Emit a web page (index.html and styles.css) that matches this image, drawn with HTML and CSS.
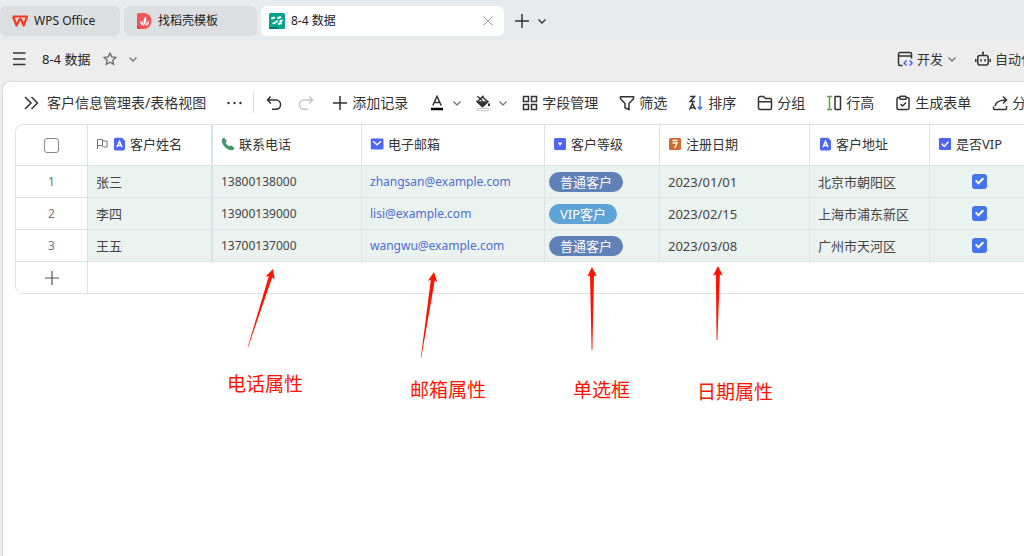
FILE: index.html
```html
<!DOCTYPE html>
<html lang="zh-CN">
<head>
  <meta charset="UTF-8">
  <meta name="viewport" content="width=device-width, initial-scale=1">
  <title>8-4 数据</title>
  <link rel="stylesheet" href="styles.css">
</head>
<body>
  <nav class="tabs">
    <a class="tab tab-home" href="#">
      <svg class="tab-icon" viewBox="0 0 16 16"><path d="M1 3.500h14L11.800 12.500 8.600 5.500M1 3.500l3.600 9L8 5.500" fill="none" stroke="#f5391f" stroke-width="2.200" stroke-linejoin="round"/></svg>
      WPS Office
    </a>
    <a class="tab tab-template" href="#">
      <svg class="tab-icon" viewBox="0 0 16 16"><path d="M3 0h5a7.500 8 0 0 1 0 16H3a2 2 0 0 1-2-2V2a2 2 0 0 1 2-2z" fill="#f0575a"/><path d="M1 12l3 4H3a2 2 0 0 1-2-2z" fill="#d32f35"/><path d="M8 13c-3-1-4-3-3.500-5 2 .5 3 2 3.500 5zM8.300 12c-1.500-3-1-6 1.200-8.500 1.500 3 1 6-1.200 8.500zM9.500 13c.2-2 1.200-4 3.500-5 .3 2.500-1 4.500-3.500 5z" fill="#fff"/></svg>
      找稻壳模板
    </a>
    <div class="tab tab-active">
      <svg class="tab-icon" viewBox="0 0 16 16"><rect width="16" height="16" rx="1.500" fill="#07a58f"/><path d="M0 14h8l2 2H1.500A1.500 1.500 0 0 1 0 14.500z" fill="#04786a"/><path d="M3.200 5.300l1.800-.6M9 5l2.200-.7M4.500 10.200l1.500-.5M10 10.800l1.800-.6M6.500 6.500M11.500 8l1.200-.3M7 8.800l1-.3" stroke="#fff" stroke-width="2.200" stroke-linecap="round"/></svg>
      <span class="tab-name">8-4 数据</span>
      <button class="icon-btn" aria-label="关闭"><svg class="close" viewBox="0 0 12 12"><path d="M1.500 1.500l9 9M10.500 1.500l-9 9"/></svg></button>
    </div>
    <button class="icon-btn tab-add" aria-label="新建"><svg class="icon" viewBox="0 0 16 16"><path d="M8 1v14M1 8h14"/></svg></button>
    <button class="icon-btn" aria-label="更多标签"><svg class="chevron dark" viewBox="0 0 10 10"><path d="M1.500 3.500L5 7l3.500-3.500"/></svg></button>
  </nav>

  <header class="header">
    <button class="icon-btn" aria-label="菜单"><svg class="icon" viewBox="0 0 16 16"><path d="M2 2h12.500M2 8h12.500M2 13.500h12.500"/></svg></button>
    <h1 class="doc-name">8-4 数据</h1>
    <button class="icon-btn" aria-label="收藏"><svg class="icon star" viewBox="0 0 16 16"><path d="M8 2.200l1.800 3.700 4 .5-3 2.800.8 4L8 11.300l-3.600 1.900.8-4-3-2.800 4-.5z"/></svg></button>
    <button class="icon-btn" aria-label="文件操作"><svg class="chevron" viewBox="0 0 10 10"><path d="M1.500 3.500L5 7l3.500-3.500"/></svg></button>
    <div class="header-tools">
      <button class="tool">
        <svg class="icon" viewBox="0 0 16 16"><path d="M5.500 14.500H3A1.500 1.500 0 0 1 1.500 13V3A1.500 1.500 0 0 1 3 1.500h10A1.500 1.500 0 0 1 14.500 3v4.500M1.500 5h13"/><path d="M9.500 9.500L7.200 12l2.300 2.500M12.700 9.500L15 12l-2.300 2.500" stroke="#4a63f0"/></svg>
        开发
        <svg class="chevron" viewBox="0 0 10 10"><path d="M1.500 3.500L5 7l3.500-3.500"/></svg>
      </button>
      <button class="tool">
        <svg class="icon" viewBox="0 0 16 16"><rect x="2.800" y="4.500" width="10.400" height="9.500" rx="2"/><path d="M8 4.500V1M7 1.500h2M.8 8v3M15.200 8v3M6 8v2.500M10 8v2.500"/></svg>
        自动化
      </button>
    </div>
  </header>

  <main class="panel">
    <div class="toolbar">
      <button class="tool view-name">
        <svg class="icon" viewBox="0 0 16 16"><path d="M2 2l6 6-6 6M8.500 2l6 6-6 6"/></svg>
        客户信息管理表/表格视图
      </button>
      <button class="icon-btn" aria-label="更多"><svg class="icon dots" viewBox="0 0 16 16"><circle cx="1.500" cy="8" r="1.200"/><circle cx="7.500" cy="8" r="1.200"/><circle cx="13.500" cy="8" r="1.200"/></svg></button>
      <div class="history">
        <button class="icon-btn" aria-label="撤销"><svg class="icon" viewBox="0 0 16 16"><path d="M4.500 1.500L1.500 5l3.500 3.500M1.500 5H10a4.600 4.600 0 0 1 0 9.200H6"/></svg></button>
        <button class="icon-btn" aria-label="重做" disabled><svg class="icon" viewBox="0 0 16 16"><path d="M11.500 1.500l3 3.500-3.500 3.500M14.500 5H6a4.600 4.600 0 0 0 0 9.200h4"/></svg></button>
      </div>
      <button class="tool">
        <svg class="icon" viewBox="0 0 16 16"><path d="M8 1v14M1 8h14"/></svg>
        添加记录
      </button>
      <div class="colors">
        <button class="tool" aria-label="字体颜色">
          <svg class="icon" viewBox="0 0 16 16"><path d="M3.800 10.500L8 1.300l4.200 9.200M5.200 7.500h5.600"/><path d="M2 14h12" stroke="#000" stroke-width="2.600"/></svg>
          <svg class="chevron" viewBox="0 0 10 10"><path d="M1.500 3.500L5 7l3.500-3.500"/></svg>
        </button>
        <button class="tool" aria-label="填充颜色">
          <svg class="icon" viewBox="0 0 16 16"><path d="M2.500 6.500L7.500 2l5 4.500L7.500 11.500zM2.500 1.200l5 4.500M4 5L8.500.8"/><path d="M2.500 7h10l-5 4.500z" fill="#333"/><path d="M14 8.500V11" stroke-width="2"/><path d="M2 13.500h11.500v2H2z" stroke="#ccc" stroke-width="1"/></svg>
          <svg class="chevron" viewBox="0 0 10 10"><path d="M1.500 3.500L5 7l3.500-3.500"/></svg>
        </button>
      </div>
      <button class="tool">
        <svg class="icon" viewBox="0 0 16 16"><rect x="1.500" y="1.500" width="5" height="5"/><rect x="9.500" y="1.500" width="5" height="5"/><rect x="1.500" y="9.500" width="5" height="5"/><rect x="9.500" y="9.500" width="5" height="5"/></svg>
        字段管理
      </button>
      <button class="tool">
        <svg class="icon" viewBox="0 0 16 16"><path d="M1.500 1.800h13v2L10 8.500v6L6 12.800V8.500L1.500 3.800z"/></svg>
        筛选
      </button>
      <button class="tool">
        <svg class="icon" viewBox="0 0 16 16"><path d="M2 1.500h4.500L2.200 6.500H7M1.500 14.500l3-6 3 6M2.500 12.800h4"/><path d="M12 1v13M9.800 11.800L12 14.300l2.200-2.500" stroke="#4a7be8"/></svg>
        排序
      </button>
      <button class="tool">
        <svg class="icon" viewBox="0 0 16 16"><path d="M1.500 13V3A1.500 1.500 0 0 1 3 1.500h3.500l2 2H13A1.500 1.500 0 0 1 14.500 5v8a1.500 1.500 0 0 1-1.500 1.500H3A1.500 1.500 0 0 1 1.500 13zM1.500 6.800h13"/></svg>
        分组
      </button>
      <button class="tool">
        <svg class="icon" viewBox="0 0 16 16"><path d="M1 1.500h5M3.500 1.500v13M1 14.500h5" stroke="#5fa046"/><rect x="9" y="1.500" width="5.500" height="13" rx=".5"/></svg>
        行高
      </button>
      <button class="tool">
        <svg class="icon" viewBox="0 0 16 16"><path d="M5 2.500H3.500A1.500 1.500 0 0 0 2 4v9a1.500 1.500 0 0 0 1.500 1.500h9A1.500 1.500 0 0 0 14 13V4a1.500 1.500 0 0 0-1.500-1.500H11"/><rect x="5" y="1.200" width="6" height="3" rx=".8"/><path d="M5.500 9l2 2 3.500-3.500"/></svg>
        生成表单
      </button>
      <button class="tool">
        <svg class="icon" viewBox="0 0 16 16"><path d="M11 1.500l3.500 3.500L11 8.500M14 5c-6 0-10 2-11 6M1.500 11.500v2a1 1 0 0 0 1 1h11a1 1 0 0 0 1-1V11"/></svg>
        分享
      </button>
    </div>

    <div class="grid">
      <table>
        <colgroup>
          <col class="col-index"><col class="col-name"><col class="col-phone"><col class="col-mail">
          <col class="col-level"><col class="col-date"><col class="col-address"><col class="col-vip"><col>
        </colgroup>
        <thead>
          <tr>
            <th class="index"><input class="box" type="checkbox" aria-label="全选"></th>
            <th class="frozen"><div class="field">
              <svg class="flag" viewBox="0 0 12 14"><path d="M1.500 12V2.500h5v6h-5M6.500 4h4.500v6H7.500l-1-1.500"/></svg>
              <svg class="type" viewBox="0 0 14 14"><path d="M3.500.8H10l3 3v7.700a2 2 0 0 1-2 2H3.500A1.500 1.500 0 0 1 2 12V2.300A1.500 1.500 0 0 1 3.500.8z" fill="#4d66f5"/><path d="M5 10.300l2.500-6 2.500 6M5.800 8.500h3.400" fill="none" stroke="#fff" stroke-width="1.400"/></svg>
              客户姓名</div></th>
            <th><div class="field">
              <svg class="type" viewBox="0 0 14 14"><path d="M.8 2.200L3 .6l2.800 3.500-1.200 1.700c.7 1.500 1.800 2.500 3.500 3.400l1.700-.9 3.500 2.400c.3 1.300-1.300 2.500-2.600 2.500C5.300 13.200.1 7 .8 2.200z" fill="#459668"/></svg>
              联系电话</div></th>
            <th><div class="field">
              <svg class="type" viewBox="0 0 14 14"><rect x=".8" y="1.500" width="12.700" height="11" rx="1.200" fill="#4d66f5"/><path d="M3 4.200l4 3.600 4-3.600" fill="none" stroke="#fff" stroke-width="1.300"/></svg>
              电子邮箱</div></th>
            <th><div class="field">
              <svg class="type" viewBox="0 0 14 14"><rect x="1" y="1" width="12" height="12" rx="1.500" fill="#4d66f5"/><path d="M4.800 5.500h4.400L7 9z" fill="#fff"/></svg>
              客户等级</div></th>
            <th><div class="field">
              <svg class="type" viewBox="0 0 14 14"><rect x="1" y="1" width="12" height="12" rx="1.500" fill="#ce6a32"/><path d="M4.500 3.500h5M4.500 6h4.700L6.800 11" fill="none" stroke="#fff" stroke-width="1.400"/></svg>
              注册日期</div></th>
            <th><div class="field">
              <svg class="type" viewBox="0 0 14 14"><path d="M3.500.8H10l3 3v7.700a2 2 0 0 1-2 2H3.500A1.500 1.500 0 0 1 2 12V2.300A1.500 1.500 0 0 1 3.500.8z" fill="#4d66f5"/><path d="M5 10.300l2.500-6 2.500 6M5.800 8.500h3.400" fill="none" stroke="#fff" stroke-width="1.400"/></svg>
              客户地址</div></th>
            <th><div class="field">
              <svg class="type" viewBox="0 0 14 14"><rect x="1" y="1" width="12" height="12" rx="1" fill="#4d66f5"/><path d="M3.700 6.800l2.500 2.600 4.300-4.600" fill="none" stroke="#fff" stroke-width="1.500"/></svg>
              是否VIP</div></th>
            <th></th>
          </tr>
        </thead>
        <tbody>
          <tr>
            <td class="index">1</td>
            <td class="frozen">张三</td>
            <td class="contact">13800138000</td>
            <td class="contact"><a href="mailto:zhangsan@example.com">zhangsan@example.com</a></td>
            <td class="level"><span class="tag">普通客户</span></td>
            <td>2023/01/01</td>
            <td>北京市朝阳区</td>
            <td class="check"><input class="box" type="checkbox" aria-label="张三 是否VIP" checked></td>
            <td></td>
          </tr>
          <tr>
            <td class="index">2</td>
            <td class="frozen">李四</td>
            <td class="contact">13900139000</td>
            <td class="contact"><a href="mailto:lisi@example.com">lisi@example.com</a></td>
            <td class="level"><span class="tag tag-vip">VIP客户</span></td>
            <td>2023/02/15</td>
            <td>上海市浦东新区</td>
            <td class="check"><input class="box" type="checkbox" aria-label="李四 是否VIP" checked></td>
            <td></td>
          </tr>
          <tr>
            <td class="index">3</td>
            <td class="frozen">王五</td>
            <td class="contact">13700137000</td>
            <td class="contact"><a href="mailto:wangwu@example.com">wangwu@example.com</a></td>
            <td class="level"><span class="tag">普通客户</span></td>
            <td>2023/03/08</td>
            <td>广州市天河区</td>
            <td class="check"><input class="box" type="checkbox" aria-label="王五 是否VIP" checked></td>
            <td></td>
          </tr>
        </tbody>
        <tfoot>
          <tr>
            <td class="index"><button class="icon-btn" aria-label="添加一行"><svg class="icon add-row" viewBox="0 0 16 16"><path d="M8 1v14M1 8h14"/></svg></button></td>
            <td colspan="8"></td>
          </tr>
        </tfoot>
      </table>
    </div>
  </main>

  <!-- notes drawn over the sheet -->
  <div class="notes">
    <svg class="arrows" width="1024" height="556" viewBox="0 0 1024 556">
      <path transform="translate(273 269) rotate(17.800)" d="M0 0l4.800 9.500-3-1.200L.2 82h-.4L-1.800 8.300l-3 1.200z"/>
      <path transform="translate(434 272) rotate(8.600)" d="M0 0l4.800 9.500-2.800-1.200L.2 87h-.4L-2 8.300l-2.800 1.200z"/>
      <path transform="translate(592 267)" d="M0 0l4.800 9.500-2.800-1L.4 83h-.8L-2 8.500l-2.800 1z"/>
      <path transform="translate(718 266) rotate(.8)" d="M0 0l4.800 9.500-2.800-1L.4 74h-.8L-2 8.500l-2.800 1z"/>
    </svg>
    <span class="note note-phone">电话属性</span>
    <span class="note note-mail">邮箱属性</span>
    <span class="note note-level">单选框</span>
    <span class="note note-date">日期属性</span>
  </div>
</body>
</html>
```
FILE: styles.css
```css
* {
  box-sizing: border-box;
}

body {
  margin: 0;
  min-height: 100vh;
  display: flex;
  flex-direction: column;
  position: relative;
  overflow: hidden;
  font-family: "Noto Sans", "Noto Sans CJK SC", sans-serif;
  font-size: 13px;
  line-height: 20px;
  color: #333;
  background: #ededed;
}

button {
  font: inherit;
  color: inherit;
  background: none;
  border: none;
  padding: 0;
  cursor: pointer;
}

svg {
  display: block;
  flex: none;
}

.icon {
  width: 16px;
  height: 16px;
  fill: none;
  stroke: #333;
  stroke-width: 1.5;
}

.dots {
  fill: #333;
  stroke: none;
}

.chevron {
  width: 10px;
  height: 10px;
  fill: none;
  stroke: #777;
  stroke-width: 1.4;
}

.chevron.dark {
  stroke: #333;
}

.icon-btn {
  display: flex;
  align-items: center;
  flex: none;
}

.icon-btn:disabled .icon {
  stroke: #c8c8c8;
}

/* window tabs */
.tabs {
  display: flex;
  align-items: center;
  gap: 4px;
  height: 41px;
  padding-top: 1px;
  background: #e8ebed;
}

.tab {
  display: flex;
  align-items: center;
  flex: none;
  gap: 6px;
  height: 30px;
  padding: 0 12px;
  border-radius: 6px;
  font-size: 12px;
  color: #222;
  text-decoration: none;
  background: #dbdfe1;
}

.tab-icon {
  width: 16px;
  height: 16px;
}

.tab-home {
  width: 120px;
}

.tab-template {
  width: 133px;
}

.tab-active {
  width: 243px;
  padding: 0 10px 0 8px;
  background: #fff;
}

.tab-name {
  flex: 1;
}

.close {
  width: 12px;
  height: 12px;
  fill: none;
  stroke: #999;
}

.tab-add {
  margin: 0 3px 0 6px;
}

/* document header */
.header {
  display: flex;
  align-items: center;
  height: 40px;
  padding: 0 0 4px 11px;
}

.doc-name {
  margin: 0 12px 0 15px;
  font-size: 13px;
  font-weight: 400;
  color: #222;
}

.star {
  margin-right: 10px;
  stroke: #666;
  stroke-width: 1.3;
}

.header-tools {
  display: flex;
  gap: 18px;
  margin: 0 -10px 0 auto;
}

.tool {
  display: flex;
  align-items: center;
  flex: none;
  gap: 4px;
  white-space: nowrap;
}

/* sheet panel */
.panel {
  flex: 1;
  margin-left: 2px;
  background: #fff;
  border: 1px solid #dcdcdc;
  border-width: 1px 0 0 1px;
  border-radius: 8px 0 0 0;
  overflow: hidden;
}

.toolbar {
  display: flex;
  align-items: center;
  gap: 21px;
  height: 42px;
  padding-left: 20px;
  font-size: 14px;
}

.view-name {
  gap: 8px;
}

.history {
  display: flex;
  gap: 16px;
  height: 20px;
  align-items: center;
  margin: 0 -3px 0 -11px;
  padding-left: 12px;
  border-left: 1px solid #ddd;
}

.colors {
  display: flex;
  gap: 13px;
  margin-right: -7px;
}

.colors .tool {
  gap: 7px;
}

/* data grid */
.grid {
  margin-left: 12px;
  border: 1px solid #e0e2e2;
  border-width: 1px 0 0 1px;
  border-radius: 8px 0 0 8px;
  overflow: hidden;
}

table {
  width: 100%;
  min-width: 1120px;
  table-layout: fixed;
  border-collapse: separate;
  border-spacing: 0;
}

.col-index { width: 72px; }
.col-name { width: 125px; }
.col-phone { width: 149px; }
.col-mail { width: 183px; }
.col-level { width: 115px; }
.col-date { width: 150px; }
.col-address { width: 120px; }
.col-vip { width: 100px; }

th,
td {
  height: 32px;
  padding: 0 8px;
  font-weight: 400;
  text-align: left;
  white-space: nowrap;
  border-right: 1px solid #dfe3e3;
  border-bottom: 1px solid #dfe3e3;
}

th {
  height: 41px;
  padding-bottom: 2px;
}

tbody td {
  color: #444;
  background: #ebf3f1;
}

td a {
  color: #4c6dd4;
  text-decoration: none;
}

.contact {
  font-size: 12px;
}

.frozen {
  border-right: 2px solid #dbe2e6;
}

.index {
  padding: 0;
  text-align: center;
}

tbody .index {
  font-size: 12px;
  color: #777;
  background: #fff;
}

.index .icon-btn {
  margin: 0 auto;
}

.add-row {
  stroke: #555;
  stroke-width: 1.2;
}

.field {
  display: flex;
  align-items: center;
  gap: 4px;
}

.type {
  width: 14px;
  height: 14px;
}

.flag {
  width: 12px;
  height: 14px;
  fill: none;
  stroke: #777;
}

.level {
  padding: 0 4px;
}

.tag {
  display: table;
  padding: 0 11px;
  border-radius: 10px;
  color: #fff;
  background: #6081b8;
}

.tag-vip {
  background: #5fa2d6;
}

.check {
  padding: 0;
  text-align: center;
}

.box {
  appearance: none;
  display: block;
  width: 15px;
  height: 15px;
  margin: 0 auto;
  border: 1px solid #888;
  border-radius: 3px;
  background: #fff;
}

.box:checked {
  position: relative;
  border: none;
  background: #4474ee;
}

.box:checked::after {
  content: "";
  position: absolute;
  left: 5px;
  top: 2px;
  width: 3px;
  height: 6px;
  border: solid #fff;
  border-width: 0 2px 2px 0;
  transform: rotate(45deg);
}

/* notes over the sheet */
.notes {
  position: absolute;
  inset: 0;
  pointer-events: none;
}

.arrows {
  fill: #ff1400;
}

.note {
  position: absolute;
  font-size: 19px;
  line-height: 24px;
  color: #ff1400;
}

.note-phone {
  left: 227px;
  top: 372px;
}

.note-mail {
  left: 410px;
  top: 378px;
}

.note-level {
  left: 573px;
  top: 378px;
}

.note-date {
  left: 697px;
  top: 380px;
}
```
